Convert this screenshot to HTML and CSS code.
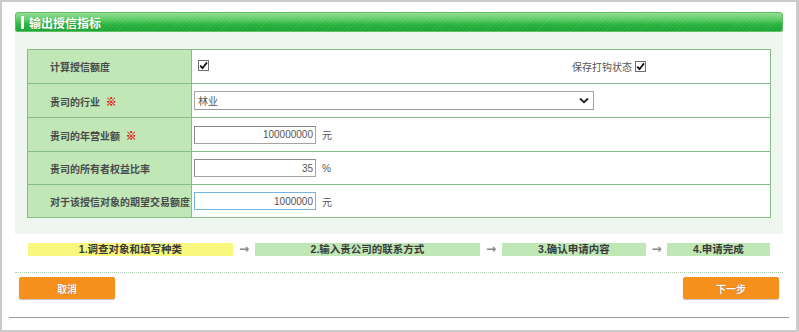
FILE: index.html
```html
<!DOCTYPE html>
<html lang="zh-CN">
<head>
<meta charset="utf-8">
<title>输出授信指标</title>
<link rel="stylesheet" href="styles.css">
</head>
<body>
<div class="frame">
  <div class="section">
    <div class="header"><span class="bar"></span><span class="title">输出授信指标</span></div>
    <div class="panel">
      <table class="form">
        <colgroup><col class="c1"><col class="c2"></colgroup>
        <tr>
          <td class="label">计算授信额度</td>
          <td class="value split">
            <span class="cb"><svg width="9" height="9" viewBox="0 0 9 9"><path d="M1.2 4.6 L3.5 7.2 L8 1.4" fill="none" stroke="#111" stroke-width="1.8"/></svg></span>
            <span class="keep">保存打钩状态<span class="cb"><svg width="9" height="9" viewBox="0 0 9 9"><path d="M1.2 4.6 L3.5 7.2 L8 1.4" fill="none" stroke="#111" stroke-width="1.8"/></svg></span></span>
          </td>
        </tr>
        <tr>
          <td class="label">贵司的行业 <span class="req">※</span></td>
          <td class="value">
            <div class="select"><span>林业</span><svg width="10" height="7" viewBox="0 0 10 7"><path d="M1 1.5 L5 5.2 L9 1.5" fill="none" stroke="#222" stroke-width="1.8"/></svg></div>
          </td>
        </tr>
        <tr>
          <td class="label">贵司的年营业额 <span class="req">※</span></td>
          <td class="value"><input class="num" type="text" value="100000000"><span class="unit">元</span></td>
        </tr>
        <tr>
          <td class="label">贵司的所有者权益比率</td>
          <td class="value"><input class="num" type="text" value="35"><span class="unit">%</span></td>
        </tr>
        <tr>
          <td class="label">对于该授信对象的期望交易额度</td>
          <td class="value"><input class="num focus" type="text" value="1000000"><span class="unit">元</span></td>
        </tr>
      </table>
    </div>
    <div class="steps">
      <div class="step s1 current">1.调查对象和填写种类</div>
      <div class="arrow">→</div>
      <div class="step s2">2.输入贵公司的联系方式</div>
      <div class="arrow">→</div>
      <div class="step s3">3.确认申请内容</div>
      <div class="arrow a3">→</div>
      <div class="step s4">4.申请完成</div>
    </div>
    <div class="actions">
      <button class="btn">取消</button>
      <button class="btn">下一步</button>
    </div>
  </div>
  <div class="footline"></div>
</div>
</body>
</html>
```

FILE: styles.css
```css
* { box-sizing: border-box; }
html, body { margin: 0; padding: 0; background: #fff; }
body {
  font-family: "Liberation Sans", "Noto Sans CJK SC", sans-serif;
  font-size: 10px;
  color: #444;
}
.frame {
  width: 799px;
  height: 332px;
  border-style: solid;
  border-color: #cbcbcb;
  border-width: 2px 3px 2px 2px;
  background: #fff;
}
.section {
  margin: 10px 13px 0;
}
.header {
  height: 20px;
  border: 1px solid #5fbf63;
  border-radius: 3px 3px 2px 2px;
  background:
    repeating-linear-gradient(135deg, rgba(255,255,255,0.07) 0 1px, rgba(0,0,0,0) 1px 3px),
    linear-gradient(#92dc92 0%, #5ccc66 35%, #27b23e 65%, #1aa534 100%);
  display: flex;
  align-items: center;
  padding-left: 5px;
}
.bar {
  width: 3px;
  height: 13px;
  background: #fff;
  margin-right: 5px;
}
.title {
  color: #fff;
  font-weight: bold;
  font-size: 12px;
  text-shadow: 0 0 1px rgba(0,80,0,0.4);
}
.panel {
  height: 202px;
  background: #eff5ef;
  padding: 17px 12px 0;
}
.form {
  width: 744px;
  border-collapse: collapse;
  table-layout: fixed;
  border: 1px solid #86bd86;
}
.c1 { width: 164px; }
.form td {
  border: 1px solid #86bd86;
  height: 34px;
  padding: 0;
  vertical-align: middle;
}
.form tr:nth-child(4) td, .form tr:nth-child(5) td { height: 33px; }
.label {
  background: #c1e7b7;
  padding-left: 22px !important;
  font-weight: bold;
  color: #4a4a4a;
  white-space: nowrap;
}
.req {
  color: #e51010;
  margin-left: 3px;
  font-weight: bold;
  font-size: 11px;
  font-family: "Noto Sans CJK SC", sans-serif;
  text-shadow: 0 0 0.6px #e51010;
}
.value {
  background: #fff;
  padding-left: 2px !important;
  color: #444;
}
.split > .cb { margin-left: 4px; }
.keep {
  float: right;
  margin-right: 124px;
  display: inline-flex;
  align-items: center;
  gap: 3px;
  color: #555;
}
.cb {
  display: inline-flex;
  align-items: center;
  justify-content: center;
  width: 11px;
  height: 11px;
  border: 1px solid #6f6f6f;
  background: #fff;
  vertical-align: middle;
}
.select {
  width: 400px;
  height: 19px;
  border: 1px solid #a6a6a6;
  border-bottom-color: #999;
  display: flex;
  align-items: center;
  justify-content: space-between;
  padding: 0 4px 0 3px;
  color: #555;
  background: #fff;
}
.num {
  width: 122px;
  height: 18px;
  border: 1px solid #a3a3a3;
  border-top-color: #8a8a8a;
  border-left-color: #8a8a8a;
  padding: 0 2px;
  margin: 0;
  text-align: right;
  font-family: "Liberation Sans", sans-serif;
  font-size: 10px;
  color: #555;
  vertical-align: middle;
  outline: none;
}
.num.focus { border: 1px solid #73b4e2; }
.unit {
  margin-left: 6px;
  vertical-align: middle;
  color: #555;
}
.steps {
  display: flex;
  margin: 9px 0 0 13px;
  height: 13px;
}
.step {
  height: 13px;
  line-height: 13px;
  text-align: center;
  font-weight: bold;
  font-size: 10.5px;
  color: #3a3a3a;
  background: #c0e8b6;
}
.step.current { background: #f8f87e; }
.s1 { width: 205px; }
.s2 { width: 225px; }
.s3 { width: 144px; }
.s4 { width: 103px; }
.arrow {
  width: 22px;
  text-align: center;
  color: #8a8a8a;
  line-height: 13px;
  font-size: 12px;
  font-weight: bold;
  font-family: "DejaVu Sans", sans-serif;
}
.arrow.a3 { width: 21px; }
.actions {
  margin-top: 16px;
  border-top: 1px dotted #a8d0a8;
  padding: 4px 4px 0;
  display: flex;
  justify-content: space-between;
}
.btn {
  width: 96px;
  height: 22px;
  border: none;
  border-radius: 2px;
  background: #f5901d;
  box-shadow: 0 1px 1px rgba(0,0,0,0.25);
  color: #fff;
  font-family: "Noto Sans CJK SC", sans-serif;
  font-weight: bold;
  font-size: 10px;
  text-shadow: 0 0 1px rgba(120,50,0,0.6);
  padding: 0;
}
.footline {
  margin: 18px 7px 0;
  height: 1px;
  background: #9a9a9a;
}
```
